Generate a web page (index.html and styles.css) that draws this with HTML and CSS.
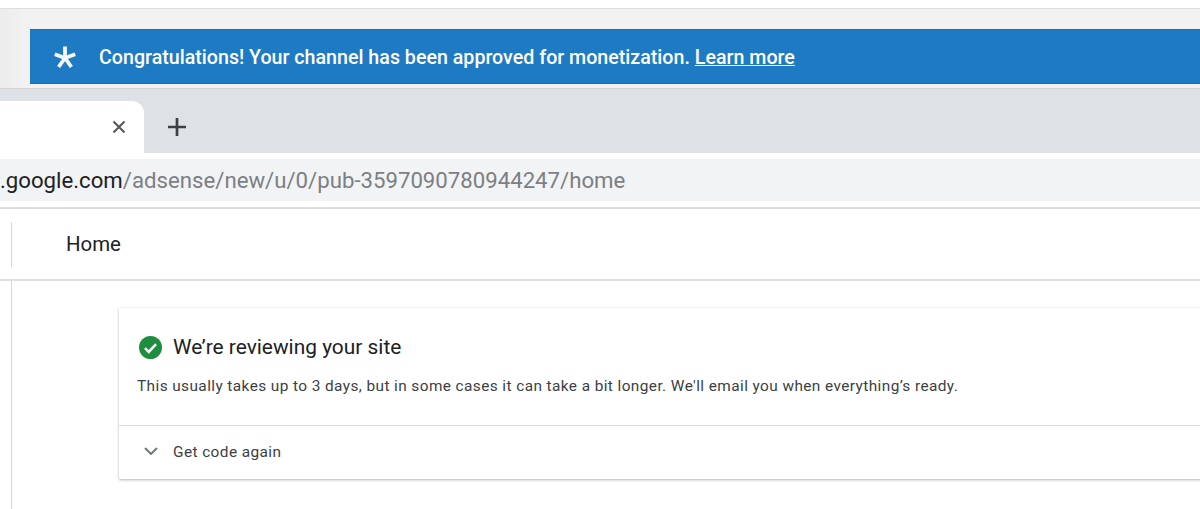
FILE: index.html
```html
<!DOCTYPE html>
<html lang="en">

<head>
    <meta charset="UTF-8">
    <link rel="stylesheet" href="styles.css">
</head>

<body>
    <div class="top-gap"></div>

    <div class="notice-bar">
        <div class="notice">
            <svg class="notice-icon" viewBox="0 0 24 24">
                <path d="M12 13V1.5M12 13L1.8 9.2M12 13l10.2-3.8M12 13L5.6 22M12 13l6.4 9" />
            </svg>
            <span class="notice-text">Congratulations! Your channel has been approved for monetization. <a href="#">Learn more</a></span>
        </div>
    </div>

    <div class="tab-strip">
        <div class="tab">
            <svg class="tab-close" viewBox="0 0 14 14">
                <path d="M1.5 1.5l11 11M12.5 1.5l-11 11" />
            </svg>
        </div>
        <svg class="tab-new" viewBox="0 0 20 20">
            <path d="M10 1v18M1 10h18" />
        </svg>
    </div>

    <div class="address-row">
        <div class="address"><span class="host">.google.com</span>/adsense/new/u/0/pub-3597090780944247/home</div>
    </div>

    <header class="page-header">
        <h1>Home</h1>
    </header>

    <main class="content">
        <section class="card">
            <div class="card-body">
                <h2>
                    <svg class="check" viewBox="0 0 24 24">
                        <circle cx="12" cy="12" r="12" />
                        <path d="M6.2 12.6l4 4 7.6-8.2" />
                    </svg>
                    We’re reviewing your site
                </h2>
                <p>This usually takes up to 3 days, but in some cases it can take a bit longer. We'll email you when everything’s ready.</p>
            </div>
            <div class="card-foot">
                <svg class="chevron" viewBox="0 0 14 8">
                    <path d="M1 1l6 6 6-6" />
                </svg>
                Get code again
            </div>
        </section>
    </main>
</body>

</html>
```

FILE: styles.css
```css
* {
    box-sizing: border-box;
}

html,
body {
    margin: 0;
    height: 509px;
    overflow: hidden;
}

body {
    background-color: #fff;
    font-family: Roboto, "Liberation Sans", sans-serif;
    color: #202124;
}

.top-gap {
    height: 8px;
}

.notice-bar {
    height: 81px;
    padding: 20px 0 5px 30px;
    background: linear-gradient(90deg, #ececec, #f2f2f2 30px);
    border-top: 1px solid #dedede;
    border-bottom: 1px solid #d4d4d4;
}

.notice {
    height: 55px;
    display: flex;
    align-items: center;
    background-color: #1e7ac3;
    border-top: 1px solid #1a70b5;
    border-bottom: 1px solid #176db3;
    color: #fff;
    font-size: 19.65px;
    font-weight: 500;
}

.notice-text {
    padding-top: 2px;
}

.notice a {
    color: #fff;
}

.notice-icon {
    width: 24px;
    height: 24px;
    margin: 0 22px 0 23px;
    fill: none;
    stroke: #f4f7fa;
    stroke-width: 3.8;
}

.tab-strip {
    height: 64px;
    padding-top: 12px;
    display: flex;
    background-color: #dee1e6;
}

.tab {
    width: 144px;
    height: 52px;
    display: flex;
    justify-content: flex-end;
    padding: 19px 18px 0 0;
    background-color: #fff;
    border-top-right-radius: 12px;
}

.tab-close {
    width: 14px;
    height: 14px;
    fill: none;
    stroke: #55585c;
    stroke-width: 2.1;
}

.tab-new {
    width: 20px;
    height: 20px;
    margin: 16px 0 0 23px;
    fill: none;
    stroke: #3c4043;
    stroke-width: 2.7;
}

.address-row {
    height: 56px;
    padding: 6px 0 6px;
    background-color: #fff;
    border-bottom: 2px solid #dcdddf;
}

.address {
    height: 42px;
    line-height: 42px;
    background-color: #f1f3f4;
    font-size: 22.2px;
    color: #7c7f83;
    white-space: nowrap;
}

.host {
    color: #202124;
}

.page-header {
    height: 72px;
    padding: 13px 0 12px 11px;
    border-bottom: 2px solid #dfdfdf;
}

.page-header h1 {
    margin: 0;
    height: 45px;
    padding-left: 54px;
    border-left: 1px solid #d8d8d8;
    font-size: 20.4px;
    font-weight: 400;
    line-height: 44px;
}

.content {
    height: 229px;
    margin-left: 11px;
    padding: 27px 0 0 107px;
    border-left: 1px solid #d8d8d8;
}

.card {
    height: 171px;
    margin-right: -4px;
    background-color: #fff;
    border-radius: 2px;
    box-shadow: 0 1px 3px rgba(60, 64, 67, 0.4);
}

.card-body {
    height: 118px;
    padding: 26px 20px 0 18px;
    border-bottom: 1px solid #dadce0;
}

.card-body h2 {
    margin: 0;
    display: flex;
    align-items: center;
    font-size: 20.9px;
    font-weight: 400;
    line-height: 26px;
}

.check {
    width: 23px;
    height: 23px;
    margin: 0 11px 0 2px;
}

.check circle {
    fill: #1e8e3e;
}

.check path {
    fill: none;
    stroke: #fff;
    stroke-width: 2.6;
}

.card-body p {
    margin: 16px 0 0;
    font-size: 15.4px;
    line-height: 20px;
    letter-spacing: 0.41px;
    color: #3c4043;
}

.card-foot {
    height: 52px;
    display: flex;
    align-items: center;
    padding-left: 25px;
    font-size: 15.4px;
    letter-spacing: 0.41px;
    color: #3c4043;
}

.chevron {
    width: 14px;
    height: 8px;
    margin: 0 15px 2px 0;
    fill: none;
    stroke: #75787c;
    stroke-width: 2;
}
```
